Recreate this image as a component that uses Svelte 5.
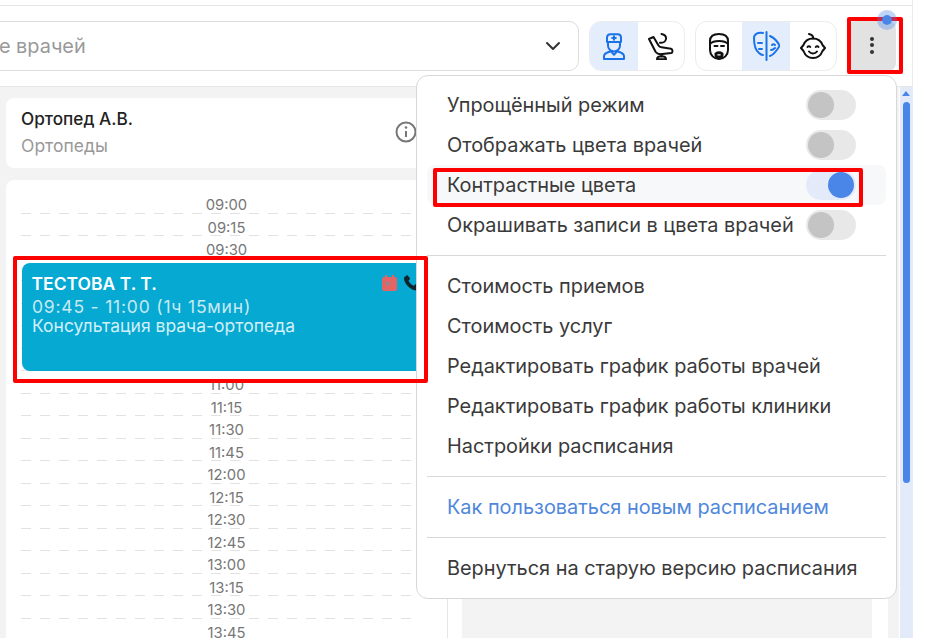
<script>
  const times = [
    '09:00', '09:15', '09:30', '09:45', '10:00', '10:15', '10:30', '10:45', '11:00', '11:15',
    '11:30', '11:45', '12:00', '12:15', '12:30', '12:45', '13:00', '13:15', '13:30', '13:45',
  ];

  // slots taken by the appointment show no label
  const busy = ['09:45', '10:00', '10:15', '10:30', '10:45'];

  const toggles = [
    { label: 'Упрощённый режим', on: false },
    { label: 'Отображать цвета врачей', on: false },
    { label: 'Контрастные цвета', on: true, hover: true },
    { label: 'Окрашивать записи в цвета врачей', on: false },
  ];

  const links = [
    'Стоимость приемов',
    'Стоимость услуг',
    'Редактировать график работы врачей',
    'Редактировать график работы клиники',
    'Настройки расписания',
  ];
</script>

<div class="app">
  <div class="strip"></div>

  <!-- Toolbar -->
  <div class="toolbar">
    <div class="select">
      <span class="placeholder">Выберите врачей</span>
      <svg class="chevron" width="16" height="10" viewBox="0 0 16 10" fill="none">
        <path d="M2 2l6 6 6-6" stroke="#333" stroke-width="2" stroke-linecap="round" stroke-linejoin="round" />
      </svg>
    </div>

    <div class="group">
      <button class="seg active w48">
        <svg width="22" height="27" viewBox="0 0 22 27" fill="none" stroke="#1a73e8" stroke-width="2" stroke-linejoin="round" stroke-linecap="round">
          <path d="M4 9V4.500C4 2.500 5.500 1.200 7.500 1.200h7c2 0 3.500 1.300 3.500 3.300V9z" />
          <path d="M11 3.200v3.600M9.200 5h3.600" />
          <path d="M5 9v3.500c0 3.300 2.700 6 6 6s6-2.700 6-6V9" />
          <path d="M1 26v-2.500c0-2.500 2-3.500 4-4.200l3-1 3 3.500 3-3.500 3 1c2 .7 4 1.700 4 4.200V26z" />
        </svg>
      </button>
      <button class="seg w46">
        <svg width="26" height="27" viewBox="0 0 26 27" fill="none" stroke="#111" stroke-width="2" stroke-linejoin="round" stroke-linecap="round">
          <path d="M1 6l4.500-2 5 8.500c.7 1.200 1.800 1.700 3 1.800l9.500 1.400c1.800.4 2 4 .2 4.400l-11 1.100c-1.800 0-3.300-.7-4.500-2.200z" />
          <path d="M13.500 1c3 .5 4.800 2.500 4.500 5-.3 2.500-3 4-6 3.800" />
          <path d="M13.500 21v2.500" />
          <path d="M9 26.300c0-2 2-3 4.500-3s4.500 1 4.500 3z" />
        </svg>
      </button>
    </div>

    <div class="group">
      <button class="seg w46">
        <svg width="22" height="27" viewBox="0 0 22 27" fill="none" stroke="#111" stroke-width="2" stroke-linejoin="round" stroke-linecap="round">
          <path d="M2 11V8c0-5 4-7 9-7s9 2 9 7v3" />
          <path d="M2 11c2-2.500 5-3 9-3s7 .5 9 3" />
          <path d="M2 11v6c0 5 4 9 9 9s9-4 9-9v-6" />
          <path d="M6.500 13h3M13 13h3" />
          <path d="M7.500 20.500c2-1.300 5-1.300 7 0v1.500c0 2-1.700 3.500-3.500 3.500s-3.500-1.500-3.500-3.500z" fill="#111" />
          <path d="M9.800 21.800h2.400" stroke="#fff" stroke-width="1.200" />
        </svg>
      </button>
      <button class="seg active w48">
        <svg width="27" height="30" viewBox="0 0 27 30" fill="none" stroke="#1a73e8" stroke-width="2" stroke-linejoin="round" stroke-linecap="round">
          <path d="M13.500 1v28" />
          <path d="M10 2C5 1 1 3 1 7c0 5 1 12 5 15 1.500 1.500 3 2 4 2" />
          <path d="M5 12h4M6 18h3" />
          <path d="M17 5c4 2 8 6 9.500 10-2.500 4-5.500 9-9.500 10" />
          <path d="M19 14c1-1 2-1 3 0M18 19c1.500 0 3-1 4-2" />
        </svg>
      </button>
      <button class="seg w46">
        <svg width="26" height="27" viewBox="0 0 26 27" fill="none" stroke="#111" stroke-width="2" stroke-linejoin="round" stroke-linecap="round">
          <path d="M3.500 12c1.500-4 5-6.500 9.500-6.500s8 2.500 9.500 6.500l2.500 3-2.500 3c-1.500 4-5 7-9.500 7s-8-3-9.500-7L1 15z" />
          <path d="M9 1c2 .5 4.500 2 4 4.500" />
          <path d="M7.500 14c.7-1 2-1 2.700 0M15.800 14c.7-1 2-1 2.700 0" />
          <path d="M9 18.500c2 2.500 6 2.500 8 0" />
        </svg>
      </button>
    </div>

    <button class="kebab" aria-label="Меню">
      <span></span><span></span><span></span>
    </button>
  </div>

  <!-- Body -->
  <div class="body">
    <div class="column">
      <div class="doctor">
        <div>
          <p class="doctor-name">Ортопед А.В.</p>
          <p class="doctor-spec">Ортопеды</p>
        </div>
        <svg class="info" width="22" height="22" viewBox="0 0 22 22" fill="none">
          <circle cx="11" cy="11" r="9.500" stroke="#777" stroke-width="2" />
          <circle cx="11" cy="6.500" r="1.300" fill="#777" />
          <path d="M11 10v6" stroke="#777" stroke-width="2" />
        </svg>
      </div>

      <div class="grid">
        {#each times as t}
          <div class="slot">
            {#if !busy.includes(t)}<span>{t}</span>{/if}
          </div>
        {/each}

        <div class="event">
          <div class="event-head">
            <span class="event-name">ТЕСТОВА Т. Т.</span>
            <svg width="15" height="16" viewBox="0 0 15 16">
              <path d="M3 0h2v2h5V0h2v2h1a2 2 0 0 1 2 2v10a2 2 0 0 1-2 2H2a2 2 0 0 1-2-2V4a2 2 0 0 1 2-2h1z" fill="#e26464" />
              <rect x="4" y="7" width="3" height="3" fill="#7f8fa0" />
            </svg>
            <svg width="17" height="16" viewBox="0 0 17 16">
              <path d="M3.500.5L1 2.500C.5 8 7 15.500 14 15.500l2.500-2.500c.3-.4.3-.9 0-1.200l-3-2.300c-.4-.3-.8-.3-1.200 0l-1.600 1.300C8.500 10 6.500 8 5.500 5.800l1.300-1.600c.3-.4.3-.8 0-1.200L4.700.5c-.3-.4-.8-.4-1.200 0z" fill="#10242c" />
            </svg>
          </div>
          <p class="event-time">09:45 - 11:00 (1ч 15мин)</p>
          <p>Консультация врача-ортопеда</p>
        </div>
      </div>
    </div>

    <div class="side">
      <div class="panel"></div>
      <div class="gutter"></div>
    </div>

    <div class="scrollbar">
      <i class="arrow"></i>
      <i class="thumb"></i>
    </div>
  </div>

  <!-- Dropdown menu -->
  <div class="menu">
    <section class="first">
      {#each toggles as item}
        <div class="row" class:hover={item.hover}>
          <span>{item.label}</span>
          <span class="switch" class:on={item.on}><i></i></span>
        </div>
      {/each}
    </section>
    <section>
      {#each links as link}
        <div class="row">{link}</div>
      {/each}
    </section>
    <section>
      <div class="row link">Как пользоваться новым расписанием</div>
    </section>
    <section>
      <div class="row">Вернуться на старую версию расписания</div>
    </section>
  </div>

  <!-- Red annotation frames -->
  <div class="mark mark-kebab"></div>
  <div class="mark mark-event"></div>
  <div class="mark mark-toggle"></div>
  <div class="dot"></div>
</div>

<style>
  :global(body) {
    margin: 0;
    background: #fff;
  }

  .app {
    position: relative;
    width: 932px;
    height: 638px;
    overflow: hidden;
    display: flex;
    flex-direction: column;
    font-family: Inter, 'Noto Sans', sans-serif;
    color: #333;
  }

  p {
    margin: 0;
  }

  button {
    border: 0;
    background: none;
    padding: 0;
  }

  .strip {
    width: 913px;
    height: 5px;
    box-sizing: border-box;
    border-right: 1px solid #ececec;
    flex: none;
  }

  .toolbar {
    flex: none;
    width: 913px;
    height: 82px;
    box-sizing: border-box;
    padding-top: 15px;
    border-top: 1px solid #e6e6e6;
    border-bottom: 1px solid #e6e6e6;
    border-right: 1px solid #ececec;
    display: flex;
    align-items: flex-start;
    gap: 10px;
  }

  .select {
    flex: none;
    width: 679px;
    height: 50px;
    margin-left: -100px;
    box-sizing: border-box;
    border: 1px solid #dcdcdc;
    border-radius: 10px;
    display: flex;
    align-items: center;
    justify-content: space-between;
    padding: 0 17px 0 14px;
  }

  .placeholder {
    font-size: 19.900px;
    color: #999;
  }

  .group {
    flex: none;
    height: 50px;
    box-sizing: border-box;
    border: 1px solid #ececec;
    border-radius: 12px;
    display: flex;
    overflow: hidden;
  }

  .seg {
    height: 100%;
    display: flex;
    align-items: center;
    justify-content: center;
  }

  .w46 {
    width: 46px;
  }

  .w48 {
    width: 48px;
  }

  .active {
    background: #e3edfc;
  }

  .kebab {
    flex: none;
    width: 48px;
    height: 50px;
    margin-left: 1px;
    padding-bottom: 2px;
    box-sizing: border-box;
    background: #e2e2e2;
    border-radius: 8px;
    display: flex;
    flex-direction: column;
    align-items: center;
    justify-content: center;
    gap: 2.500px;
  }

  .kebab span {
    width: 4px;
    height: 4px;
    border-radius: 50%;
    background: #333;
  }

  .body {
    flex: 1;
    min-height: 0;
    display: flex;
    width: 913px;
    background: #f3f3f3;
  }

  .column {
    flex: none;
    width: 448px;
    box-sizing: border-box;
    padding: 11px 0 0 6px;
    display: flex;
    flex-direction: column;
    gap: 12px;
  }

  .doctor {
    flex: none;
    height: 70px;
    box-sizing: border-box;
    background: #fff;
    border-radius: 8px;
    padding: 9px 31px 0 15px;
    display: flex;
    justify-content: space-between;
    align-items: center;
  }

  .doctor > div {
    align-self: flex-start;
  }

  .doctor-name {
    font-size: 17.200px;
    line-height: 24px;
    font-weight: 500;
    color: #222;
  }

  .doctor-spec {
    font-size: 17.500px;
    line-height: 24px;
    margin-top: 3px;
    color: #999;
  }

  .info {
    margin-top: -11px;
  }

  .grid {
    position: relative;
    flex: 1;
    background: #fff;
    border-right: 1px solid #e6e6e6;
    border-radius: 8px 0 0 0;
    padding: 11px 0 0 15px;
  }

  .slot {
    height: 22.500px;
    box-sizing: border-box;
    position: relative;
    text-align: center;
    margin-right: 30px;
    font-size: 14.800px;
    line-height: 22.500px;
    color: #777;
    background: repeating-linear-gradient(90deg, #e2e2e2 0 10px, transparent 10px 19px) bottom / 100% 1px no-repeat;
  }

  .slot span {
    position: relative;
    top: 3px;
    left: 7.500px;
  }

  .event {
    position: absolute;
    left: 16px;
    top: 83px;
    width: 420px;
    height: 108px;
    box-sizing: border-box;
    padding: 9px 22px 0 10px;
    background: #05a9d2;
    border-radius: 8px;
    font-size: 17.500px;
    line-height: 19px;
    color: #d3eff7;
  }

  .event-head {
    height: 22px;
    display: flex;
    align-items: center;
    gap: 6px;
    margin-bottom: 3px;
  }

  .event-name {
    flex: 1;
    margin-left: -0.500px;
    font-weight: 600;
    color: #fff;
  }

  .event-time {
    letter-spacing: 0.800px;
    color: #c8e9f3;
  }

  .side {
    flex: 1;
    display: flex;
    background: #fff;
    padding-left: 14px;
  }

  .panel {
    width: 410px;
    background: #f3f3f3;
  }

  .gutter {
    width: 11px;
    margin-left: 16px;
    background: #f3f3f3;
  }

  .scrollbar {
    flex: none;
    position: relative;
    width: 13px;
    background: #e3ebfa;
  }

  .arrow {
    position: absolute;
    left: 2px;
    top: 4px;
    border: 4px solid transparent;
    border-top: 0;
    border-bottom: 5px solid #4a86e8;
  }

  .thumb {
    position: absolute;
    left: 3px;
    top: 15px;
    width: 7px;
    height: 381px;
    border-radius: 4px;
    background: #4a86e8;
  }

  .menu {
    position: absolute;
    left: 416px;
    top: 75px;
    width: 481px;
    height: 524px;
    box-sizing: border-box;
    background: #fff;
    border: 1px solid #d8d8d8;
    border-radius: 12px;
    padding: 0 10px;
    font-size: 19.900px;
    color: #3a3a3a;
  }

  section {
    padding: 10px 0;
    border-bottom: 1px solid #d8d8d8;
  }

  section.first {
    padding-top: 9px;
  }

  section:last-child {
    border-bottom: 0;
  }

  .row {
    height: 40px;
    padding: 0 30px 0 20px;
    border-radius: 8px;
    display: flex;
    align-items: center;
    justify-content: space-between;
    white-space: nowrap;
  }

  .row.hover {
    background: #f7f8fa;
  }

  .link {
    color: #4f87dc;
  }

  .switch {
    flex: none;
    width: 50px;
    height: 30px;
    box-sizing: border-box;
    padding: 2px;
    border-radius: 15px;
    background: #e8e8e8;
    display: flex;
  }

  .switch i {
    width: 26px;
    height: 26px;
    border-radius: 50%;
    background: #c4c4c4;
  }

  .switch.on {
    background: #e3ebfa;
    justify-content: flex-end;
  }

  .switch.on i {
    background: #4a86e8;
  }

  .mark {
    position: absolute;
    box-sizing: border-box;
    border: 4px solid #f00;
    border-radius: 2px;
  }

  .mark-kebab {
    left: 847px;
    top: 17px;
    width: 56px;
    height: 57px;
  }

  .mark-event {
    left: 13px;
    top: 256px;
    width: 415px;
    height: 127px;
  }

  .mark-toggle {
    left: 433px;
    top: 168px;
    width: 430px;
    height: 39px;
  }

  .dot {
    position: absolute;
    left: 877px;
    top: 10px;
    width: 10px;
    height: 10px;
    border: 5px solid rgba(74, 134, 232, 0.35);
    background: #4a86e8;
    background-clip: padding-box;
    border-radius: 50%;
  }
</style>
